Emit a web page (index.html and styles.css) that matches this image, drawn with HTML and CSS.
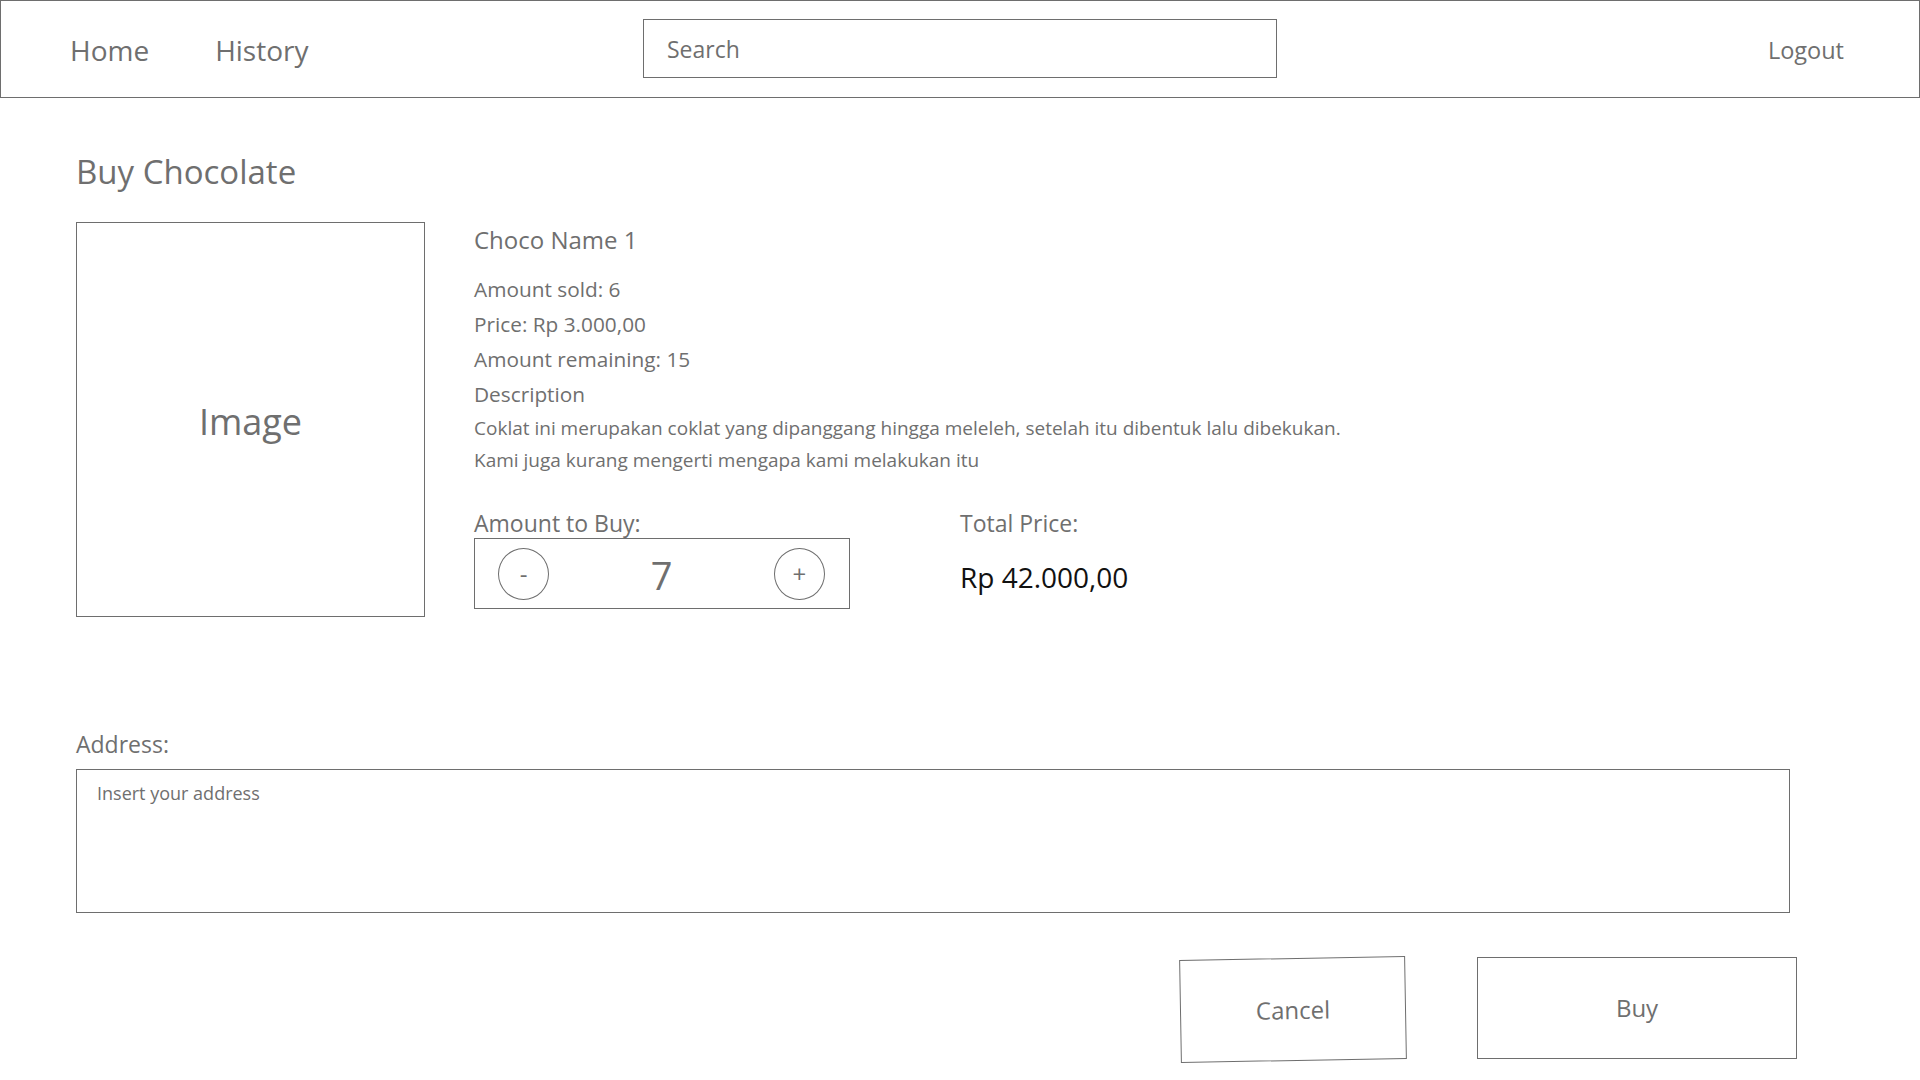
FILE: index.html
```html
<!DOCTYPE html>
<html lang="en">
<head>
<meta charset="utf-8">
<title>Buy Chocolate</title>
<link rel="stylesheet" href="styles.css">
</head>
<body>
<header class="navbar">
  <nav class="nav-links">
    <a class="nav-link" href="#">Home</a>
    <a class="nav-link" href="#">History</a>
  </nav>
  <div class="search-box"><span class="search-placeholder">Search</span></div>
  <div class="nav-right"><a class="logout" href="#">Logout</a></div>
</header>

<main class="page">
  <h1 class="page-title">Buy Chocolate</h1>

  <section class="product">
    <div class="image-box"><span class="image-label">Image</span></div>
    <div class="details">
      <h2 class="choco-name">Choco Name 1</h2>
      <p class="info">Amount sold: 6</p>
      <p class="info">Price: Rp 3.000,00</p>
      <p class="info">Amount remaining: 15</p>
      <p class="info">Description</p>
      <p class="desc">Coklat ini merupakan coklat yang dipanggang hingga meleleh, setelah itu dibentuk lalu dibekukan.</p>
      <p class="desc">Kami juga kurang mengerti mengapa kami melakukan itu</p>

      <div class="purchase">
        <div class="amount-col">
          <div class="field-label">Amount to Buy:</div>
          <div class="stepper">
            <span class="step-btn minus">-</span>
            <span class="step-value">7</span>
            <span class="step-btn plus">+</span>
          </div>
        </div>
        <div class="total-col">
          <div class="field-label">Total Price:</div>
          <div class="total-value">Rp 42.000,00</div>
        </div>
      </div>
    </div>
  </section>

  <section class="address">
    <div class="field-label">Address:</div>
    <div class="address-box"><span class="address-placeholder">Insert your address</span></div>
  </section>

  <div class="actions">
    <div class="btn btn-cancel">Cancel</div>
    <div class="btn btn-buy">Buy</div>
  </div>
</main>
</body>
</html>
```

FILE: styles.css
```css
* { box-sizing: border-box; }

html, body {
  margin: 0;
  padding: 0;
  background: #ffffff;
}

body {
  font-family: "Open Sans", "Noto Sans", sans-serif;
  color: #6f6f6f;
  width: 1920px;
  height: 1080px;
  overflow: hidden;
}

a { color: inherit; text-decoration: none; }

h1, h2, p { margin: 0; font-weight: 400; }

/* Navbar */
.navbar {
  height: 98px;
  border: 1px solid #6e6e6e;
  display: grid;
  grid-template-columns: 1fr 634px 1fr;
  align-items: center;
  padding: 2px 69px 0 69px;
}

.nav-links {
  display: flex;
  gap: 66px;
}

.nav-link {
  font-size: 28px;
  line-height: 36px;
}

.search-box {
  height: 59px;
  margin-top: -3px;
  border: 1px solid #6e6e6e;
  display: flex;
  align-items: center;
  padding-left: 23px;
}

.search-placeholder {
  font-size: 23px;
  line-height: 30px;
}

.nav-right {
  display: flex;
  justify-content: flex-end;
  padding-right: 6px;
}

.logout {
  font-size: 23.5px;
  line-height: 30px;
}

/* Page */
.page {
  padding: 0 130px 0 76px;
}

.page-title {
  font-size: 33px;
  line-height: 40px;
  margin-top: 54px;
}

.product {
  display: flex;
  align-items: flex-start;
  gap: 49px;
  margin-top: 30px;
}

.image-box {
  width: 349px;
  height: 395px;
  border: 1px solid #6e6e6e;
  display: flex;
  align-items: center;
  justify-content: center;
  flex: none;
}

.image-label {
  font-size: 36px;
  line-height: 40px;
  margin-top: 4px;
}

.details {
  padding-top: 3px;
}

.choco-name {
  font-size: 24px;
  line-height: 30px;
  margin-bottom: 17px;
}

.info {
  font-size: 20.8px;
  line-height: 35px;
}

.desc {
  font-size: 19px;
  line-height: 32px;
}

.desc:first-of-type { margin-top: 7px; }

.purchase {
  display: flex;
  gap: 110px;
  margin-top: 32px;
}

.field-label {
  font-size: 23px;
  line-height: 30px;
}

.stepper {
  width: 376px;
  height: 71px;
  border: 1px solid #6e6e6e;
  display: flex;
  align-items: center;
  justify-content: space-between;
  padding: 0 24px 0 23px;
}

.step-btn {
  width: 51px;
  height: 52px;
  border: 1px solid #6e6e6e;
  border-radius: 50%;
  display: flex;
  align-items: center;
  justify-content: center;
  font-size: 24px;
  line-height: 1;
}

.step-value {
  font-size: 38px;
  line-height: 44px;
  margin-top: 2px;
}

.total-value {
  font-size: 28px;
  line-height: 36px;
  color: #111111;
  margin-top: 21px;
}

/* Address */
.address {
  margin-top: 112px;
}

.address-box {
  height: 144px;
  border: 1px solid #6e6e6e;
  margin-top: 10px;
  padding: 9px 20px;
}

.address-placeholder {
  font-size: 18px;
  line-height: 28px;
}

/* Actions */
.actions {
  display: flex;
  justify-content: flex-end;
  gap: 71px;
  margin-top: 44px;
  margin-right: -7px;
}

.btn {
  border: 1px solid #6e6e6e;
  display: flex;
  align-items: center;
  justify-content: center;
  font-size: 24px;
  line-height: 30px;
}

.btn-cancel {
  width: 226px;
  height: 103px;
  transform: rotate(-1deg);
  margin-top: 1px;
}

.btn-buy {
  width: 320px;
  height: 102px;
}
```
